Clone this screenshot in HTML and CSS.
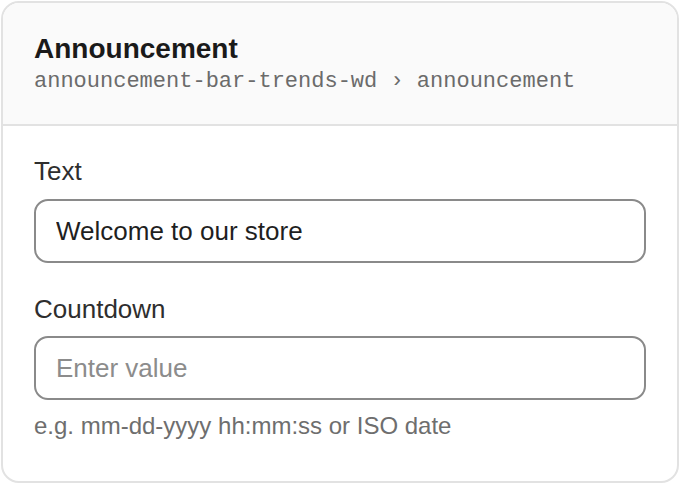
FILE: index.html
```html
<!DOCTYPE html>
<html>
<head>
<meta charset="utf-8">
<link rel="stylesheet" href="styles.css">
</head>
<body>
<div class="card">
  <div class="header">
    <div class="title">Announcement</div>
    <div class="path">announcement-bar-trends-wd › announcement</div>
  </div>
  <div class="body">
    <div class="field">
      <label class="label">Text</label>
      <input class="input" type="text" value="Welcome to our store">
    </div>
    <div class="field">
      <label class="label">Countdown</label>
      <input class="input" type="text" placeholder="Enter value">
      <div class="hint">e.g. mm-dd-yyyy hh:mm:ss or ISO date</div>
    </div>
  </div>
</div>
</body>
</html>
```

FILE: styles.css
```css
html, body {
  margin: 0;
  padding: 0;
  background: #ffffff;
}
body {
  padding: 1px;
  font-family: "Liberation Sans", Arial, sans-serif;
}
.card {
  box-sizing: border-box;
  width: 678px;
  height: 482px;
  border: 2px solid #e2e2e2;
  border-radius: 18px;
  overflow: hidden;
  background: #ffffff;
}
.header {
  background: #fafafa;
  border-bottom: 2px solid #e2e2e2;
  padding: 30px 31px 0;
  height: 123px;
  box-sizing: border-box;
}
.title {
  font-size: 28px;
  line-height: 32px;
  font-weight: 700;
  color: #1a1a1a;
}
.path {
  margin-top: 4px;
  font-family: "Liberation Mono", "Courier New", monospace;
  font-size: 22px;
  line-height: 26px;
  color: #6b6b6b;
}
.body {
  padding: 30px 31px 0;
  display: flex;
  flex-direction: column;
  gap: 31px;
}
.field {
  display: flex;
  flex-direction: column;
}
.label {
  font-size: 26px;
  line-height: 30px;
  color: #2e2e2e;
  margin-bottom: 13px;
}
.field + .field .label {
  margin-bottom: 12px;
}
.input {
  box-sizing: border-box;
  width: 612px;
  height: 64px;
  margin: 0;
  border: 2px solid #8a8a8a;
  border-radius: 14px;
  padding: 0 20px;
  font-family: "Liberation Sans", Arial, sans-serif;
  font-size: 26px;
  color: #1f1f1f;
  background: #ffffff;
  outline: none;
}
.input::placeholder {
  color: #8c8c8c;
  opacity: 1;
}
.hint {
  margin-top: 12px;
  font-size: 24px;
  line-height: 28px;
  color: #6e6e6e;
}
```
